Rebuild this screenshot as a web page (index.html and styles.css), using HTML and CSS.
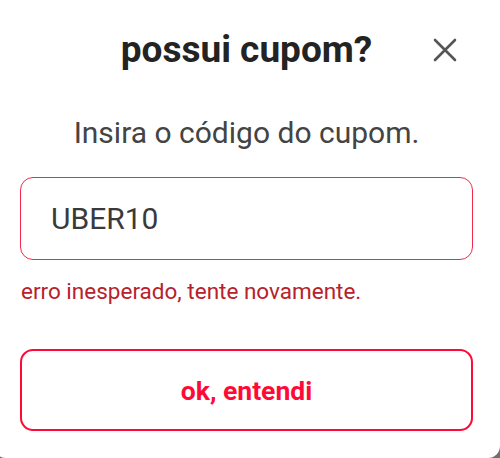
FILE: index.html
```html
<!DOCTYPE html>
<html lang="pt-BR">
<head>
  <meta charset="UTF-8">
  <meta name="viewport" content="width=device-width, initial-scale=1.0">
  <title>Possui cupom?</title>
  <link rel="stylesheet" href="styles.css">
</head>
<body>

  <div class="coupon-modal">
    <!-- Header with title and close button -->
    <div class="modal-header">
      <span></span>
      <h2 class="modal-title">possui cupom?</h2>
      <button class="close-button" aria-label="fechar">
        <svg width="24" height="24" viewBox="0 0 24 24">
          <path d="M2 2 L22 22 M22 2 L2 22" stroke="#555" stroke-width="2.6" stroke-linecap="round" fill="none"/>
        </svg>
      </button>
    </div>

    <p class="modal-subtitle">Insira o código do cupom.</p>

    <!-- Coupon input -->
    <input class="coupon-input" type="text" value="UBER10">
    <p class="error-message">erro inesperado, tente novamente.</p>

    <button class="confirm-button">ok, entendi</button>
  </div>

</body>
</html>
```

FILE: styles.css
```css
body {
  margin: 0;
  height: 100vh;
  overflow: hidden;
  background-color: #6f6f6f;
  font-family: Roboto, "Liberation Sans", Arial, sans-serif;
}

.coupon-modal {
  box-sizing: border-box;
  width: 506px;
  height: 458px;
  margin-left: -6px;
  padding: 28px 27px 0 26px;
  background-color: white;
  border-radius: 0 0 12px 12px;
  display: flex;
  flex-direction: column;
}

.modal-header {
  display: grid;
  grid-template-columns: 1fr auto 1fr;
  align-items: center;
}

.modal-title {
  margin: 0;
  font-size: 37px;
  line-height: 44px;
  font-weight: 700;
  color: #232323;
}

.close-button {
  justify-self: end;
  margin-right: 16px;
  background: none;
  border: none;
  padding: 0;
  width: 24px;
  height: 24px;
  cursor: pointer;
}

.close-button svg {
  display: block;
}

.modal-subtitle {
  margin: 43px 0 0;
  text-align: center;
  font-size: 30px;
  line-height: 36px;
  color: #444;
}

.coupon-input {
  box-sizing: border-box;
  margin-top: 26px;
  width: 100%;
  height: 83px;
  padding: 0 30px;
  border: 1.5px solid #f3284d;
  border-radius: 13px;
  font-family: inherit;
  font-size: 30px;
  color: #3a3a3a;
  outline: none;
}

.error-message {
  margin: 18px 0 0 1px;
  font-size: 22.5px;
  line-height: 26px;
  color: #b8212b;
}

.confirm-button {
  box-sizing: border-box;
  margin-top: 45px;
  width: 100%;
  height: 82px;
  background-color: white;
  border: 2px solid #ff0a36;
  border-radius: 13px;
  font-family: inherit;
  font-size: 26.5px;
  font-weight: 700;
  color: #ff0a36;
  cursor: pointer;
}
```
